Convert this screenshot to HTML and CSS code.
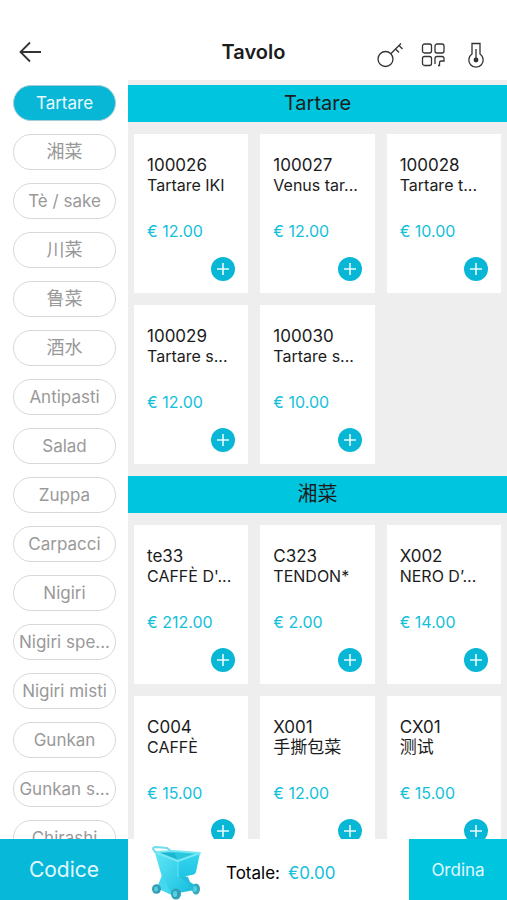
FILE: index.html
```
<!DOCTYPE html>
<html lang="it">
<head>
<meta charset="utf-8">
<meta name="viewport" content="width=device-width, initial-scale=1">
<title>Tavolo</title>
<link rel="stylesheet" href="styles.css">
</head>
<body>
<header class="topbar">
  <button class="icon-button" aria-label="Indietro"><svg width="24" height="24" viewBox="0 0 24 24"><path d="M12 2.500L2.500 12l9.500 9.500M2.500 12H23" stroke-width="1.800"/></svg></button>
  <h1 class="topbar-title">Tavolo</h1>
  <div class="topbar-actions">
    <button class="icon-button" aria-label="Chiave"><svg width="26" height="26" viewBox="0 0 26 26"><circle cx="8.500" cy="17" r="7.500"/><path d="M13.800 11.700L24 1.500M18.500 7l3.500 3.500M22 3.500l3.500 3.500"/></svg></button>
    <button class="icon-button" aria-label="Codice QR"><svg width="26" height="26" viewBox="0 0 26 26"><rect x="2.500" y="2" width="9" height="9" rx="2"/><rect x="15" y="2" width="9" height="9" rx="2"/><rect x="2.500" y="14.500" width="9" height="9" rx="2"/><path d="M15 22v-5.500q0-2 2-2h5q2 0 2 2V19h-2.500q-2 0-2 2v2.500H18"/></svg></button>
    <button class="icon-button" aria-label="Temperatura"><svg width="26" height="26" viewBox="0 0 26 26"><path d="M9 12V1.500h8V12a7.200 7.200 0 1 1-8 0zM13 7v11"/><circle cx="13" cy="18" r="1.800" class="solid"/></svg></button>
  </div>
</header>
<div class="content">
  <nav class="categories" aria-label="Categorie">
    <button class="category active">Tartare</button>
    <button class="category han">湘菜</button>
    <button class="category">Tè / sake</button>
    <button class="category han">川菜</button>
    <button class="category han">鲁菜</button>
    <button class="category han">酒水</button>
    <button class="category">Antipasti</button>
    <button class="category">Salad</button>
    <button class="category">Zuppa</button>
    <button class="category">Carpacci</button>
    <button class="category">Nigiri</button>
    <button class="category">Nigiri spe...</button>
    <button class="category">Nigiri misti</button>
    <button class="category">Gunkan</button>
    <button class="category">Gunkan s...</button>
    <button class="category">Chirashi</button>
  </nav>
  <main class="menu">
    <section>
      <h2 class="section-title">Tartare</h2>
      <div class="cards">
        <article class="card"><p class="code">100026</p><p>Tartare IKI</p><p class="price">€ 12.00</p><button class="add" aria-label="Aggiungi"><svg width="24" height="24" viewBox="0 0 24 24"><path d="M12 6v12M6 12h12"/></svg></button></article>
        <article class="card"><p class="code">100027</p><p>Venus tar...</p><p class="price">€ 12.00</p><button class="add" aria-label="Aggiungi"><svg width="24" height="24" viewBox="0 0 24 24"><path d="M12 6v12M6 12h12"/></svg></button></article>
        <article class="card"><p class="code">100028</p><p>Tartare t...</p><p class="price">€ 10.00</p><button class="add" aria-label="Aggiungi"><svg width="24" height="24" viewBox="0 0 24 24"><path d="M12 6v12M6 12h12"/></svg></button></article>
        <article class="card"><p class="code">100029</p><p>Tartare s...</p><p class="price">€ 12.00</p><button class="add" aria-label="Aggiungi"><svg width="24" height="24" viewBox="0 0 24 24"><path d="M12 6v12M6 12h12"/></svg></button></article>
        <article class="card"><p class="code">100030</p><p>Tartare s...</p><p class="price">€ 10.00</p><button class="add" aria-label="Aggiungi"><svg width="24" height="24" viewBox="0 0 24 24"><path d="M12 6v12M6 12h12"/></svg></button></article>
      </div>
    </section>
    <section>
      <h2 class="section-title">湘菜</h2>
      <div class="cards">
        <article class="card"><p class="code">te33</p><p>CAFFÈ D'...</p><p class="price">€ 212.00</p><button class="add" aria-label="Aggiungi"><svg width="24" height="24" viewBox="0 0 24 24"><path d="M12 6v12M6 12h12"/></svg></button></article>
        <article class="card"><p class="code">C323</p><p>TENDON*</p><p class="price">€ 2.00</p><button class="add" aria-label="Aggiungi"><svg width="24" height="24" viewBox="0 0 24 24"><path d="M12 6v12M6 12h12"/></svg></button></article>
        <article class="card"><p class="code">X002</p><p>NERO D’...</p><p class="price">€ 14.00</p><button class="add" aria-label="Aggiungi"><svg width="24" height="24" viewBox="0 0 24 24"><path d="M12 6v12M6 12h12"/></svg></button></article>
        <article class="card"><p class="code">C004</p><p>CAFFÈ</p><p class="price">€ 15.00</p><button class="add" aria-label="Aggiungi"><svg width="24" height="24" viewBox="0 0 24 24"><path d="M12 6v12M6 12h12"/></svg></button></article>
        <article class="card"><p class="code">X001</p><p class="han-name">手撕包菜</p><p class="price">€ 12.00</p><button class="add" aria-label="Aggiungi"><svg width="24" height="24" viewBox="0 0 24 24"><path d="M12 6v12M6 12h12"/></svg></button></article>
        <article class="card"><p class="code">CX01</p><p class="han-name">测试</p><p class="price">€ 15.00</p><button class="add" aria-label="Aggiungi"><svg width="24" height="24" viewBox="0 0 24 24"><path d="M12 6v12M6 12h12"/></svg></button></article>
      </div>
    </section>
  </main>
</div>
<footer class="bottombar">
  <button class="code-button">Codice</button>
  <div class="summary">
    <svg class="cart" width="50" height="54" viewBox="0 0 50 54" aria-hidden="true">
      <defs>
        <linearGradient id="body" x1="0" y1="0" x2="1" y2="1"><stop offset="0" stop-color="#5fe6f6"/><stop offset="1" stop-color="#18bfe0"/></linearGradient>
        <linearGradient id="side" x1="0" y1="0" x2="0" y2="1"><stop offset="0" stop-color="#35d5ee"/><stop offset="1" stop-color="#1fc4e4"/></linearGradient>
      </defs>
      <ellipse cx="44" cy="43" rx="4" ry="5.500" fill="#35a9c0"/>
      <path d="M24 28L36 31 38 36 43 39 43 44 26 47z" fill="#22bddb"/>
      <path d="M3 7L27 15 28 31 37 38 36 42 28 47 20 49 5 42 10 31z" fill="url(#body)"/>
      <path d="M10 29L20 49 5 42z" fill="#43d8ee"/>
      <path d="M26 15L48 7 44 26Q43 29 39 29L27 32z" fill="url(#side)"/>
      <path d="M3 6L22 5 48 7 26 15z" fill="#1cb6cf"/>
      <path d="M22 6L26 15 46 7z" fill="#2cc7df"/>
      <path d="M3 6L26 15 48 7 22 5z" fill="none" stroke="#79e8f4" stroke-width="2" stroke-linejoin="round"/>
      <path d="M4 7L1 3Q1 1 4 1L15 2 20 6" fill="none" stroke="#70dceb" stroke-width="2" stroke-linejoin="round"/>
      <path d="M26 16V31" stroke="#63e4f4" stroke-width="1"/>
      <g fill="#329fb6"><ellipse cx="4.500" cy="43" rx="4.500" ry="4.800"/><ellipse cx="24" cy="48" rx="5" ry="5.500"/></g>
      <g fill="#55cfe1"><ellipse cx="4" cy="43" rx="2" ry="2.500"/><ellipse cx="23" cy="48" rx="2.200" ry="3"/><ellipse cx="43" cy="43" rx="2" ry="3"/></g>
    </svg>
    <span>Totale:</span><span class="total">€0.00</span>
  </div>
  <button class="order-button">Ordina</button>
</footer>
</body>
</html>
```
FILE: styles.css
```
* {
  box-sizing: border-box;
}

body {
  margin: 0;
  height: 100vh;
  display: flex;
  flex-direction: column;
  overflow: hidden;
  background: #fff;
  color: #1c1c1c;
  font: 16px/20px Inter, "Noto Sans CJK SC", sans-serif;
}

button {
  border: 0;
  padding: 0;
  font: inherit;
  background: none;
}

h1, h2, p {
  margin: 0;
}

.topbar {
  display: grid;
  grid-template-columns: 1fr auto 1fr;
  align-items: center;
  height: 80px;
  padding: 24px 18px 0;
}

.topbar-title {
  font-size: 20px;
  line-height: 24px;
  font-weight: 600;
}

.topbar-actions {
  display: flex;
  justify-content: flex-end;
  gap: 17px;
  padding-top: 6px;
}

.icon-button {
  display: flex;
  justify-self: start;
}

.icon-button svg {
  fill: none;
  stroke: #333;
  stroke-width: 1.3;
}

.icon-button .solid {
  fill: #333;
}

.content {
  display: flex;
  flex: 1;
  min-height: 0;
}

.categories {
  flex: 0 0 128px;
  display: flex;
  flex-direction: column;
  gap: 13px;
  padding: 5px 12px 0 13px;
  overflow: hidden;
}

.category {
  flex: 0 0 36px;
  border: 1px solid #d8d8d8;
  border-radius: 18px;
  background: #fff;
  color: #999;
  font-size: 17px;
  white-space: nowrap;
}

.category.han {
  font-size: 18px;
}

.category.active {
  border-color: #a5cdd5;
  background: #08b6d6;
  color: #e9fbff;
}

.menu {
  flex: 1;
  min-width: 0;
  padding-top: 5px;
  overflow: hidden;
  background: #eee;
}

.section-title {
  height: 37px;
  background: #00c5df;
  font-size: 20px;
  line-height: 37px;
  font-weight: 400;
  text-align: center;
}

.cards {
  display: grid;
  grid-template-columns: repeat(3, 1fr);
  gap: 12px;
  padding: 12px 6px;
}

.card {
  display: flex;
  flex-direction: column;
  height: 159px;
  padding: 21px 13px 12px;
  background: #fff;
  white-space: nowrap;
}

.code,
.han-name {
  font-size: 17px;
}

.price {
  padding-top: 26px;
  color: #14bfda;
}

.add {
  display: flex;
  align-self: flex-end;
  margin-top: auto;
  border-radius: 50%;
  background: #08b6d6;
}

.add svg {
  fill: none;
  stroke: #e9fbff;
  stroke-width: 1.6;
}

.bottombar {
  display: flex;
  flex: 0 0 61px;
}

.code-button {
  flex: 0 0 128px;
  background: #08b8d9;
  color: #e2faff;
  font-size: 21px;
}

.summary {
  display: flex;
  flex: 1;
  align-items: center;
  gap: 8px;
  padding: 7px 0 0 24px;
  color: #000;
  font-size: 17px;
}

.cart {
  margin-right: 16px;
}

.total {
  color: #14bfda;
}

.order-button {
  flex: 0 0 98px;
  background: #00c5df;
  color: #e2faff;
  font-size: 17px;
}
```
